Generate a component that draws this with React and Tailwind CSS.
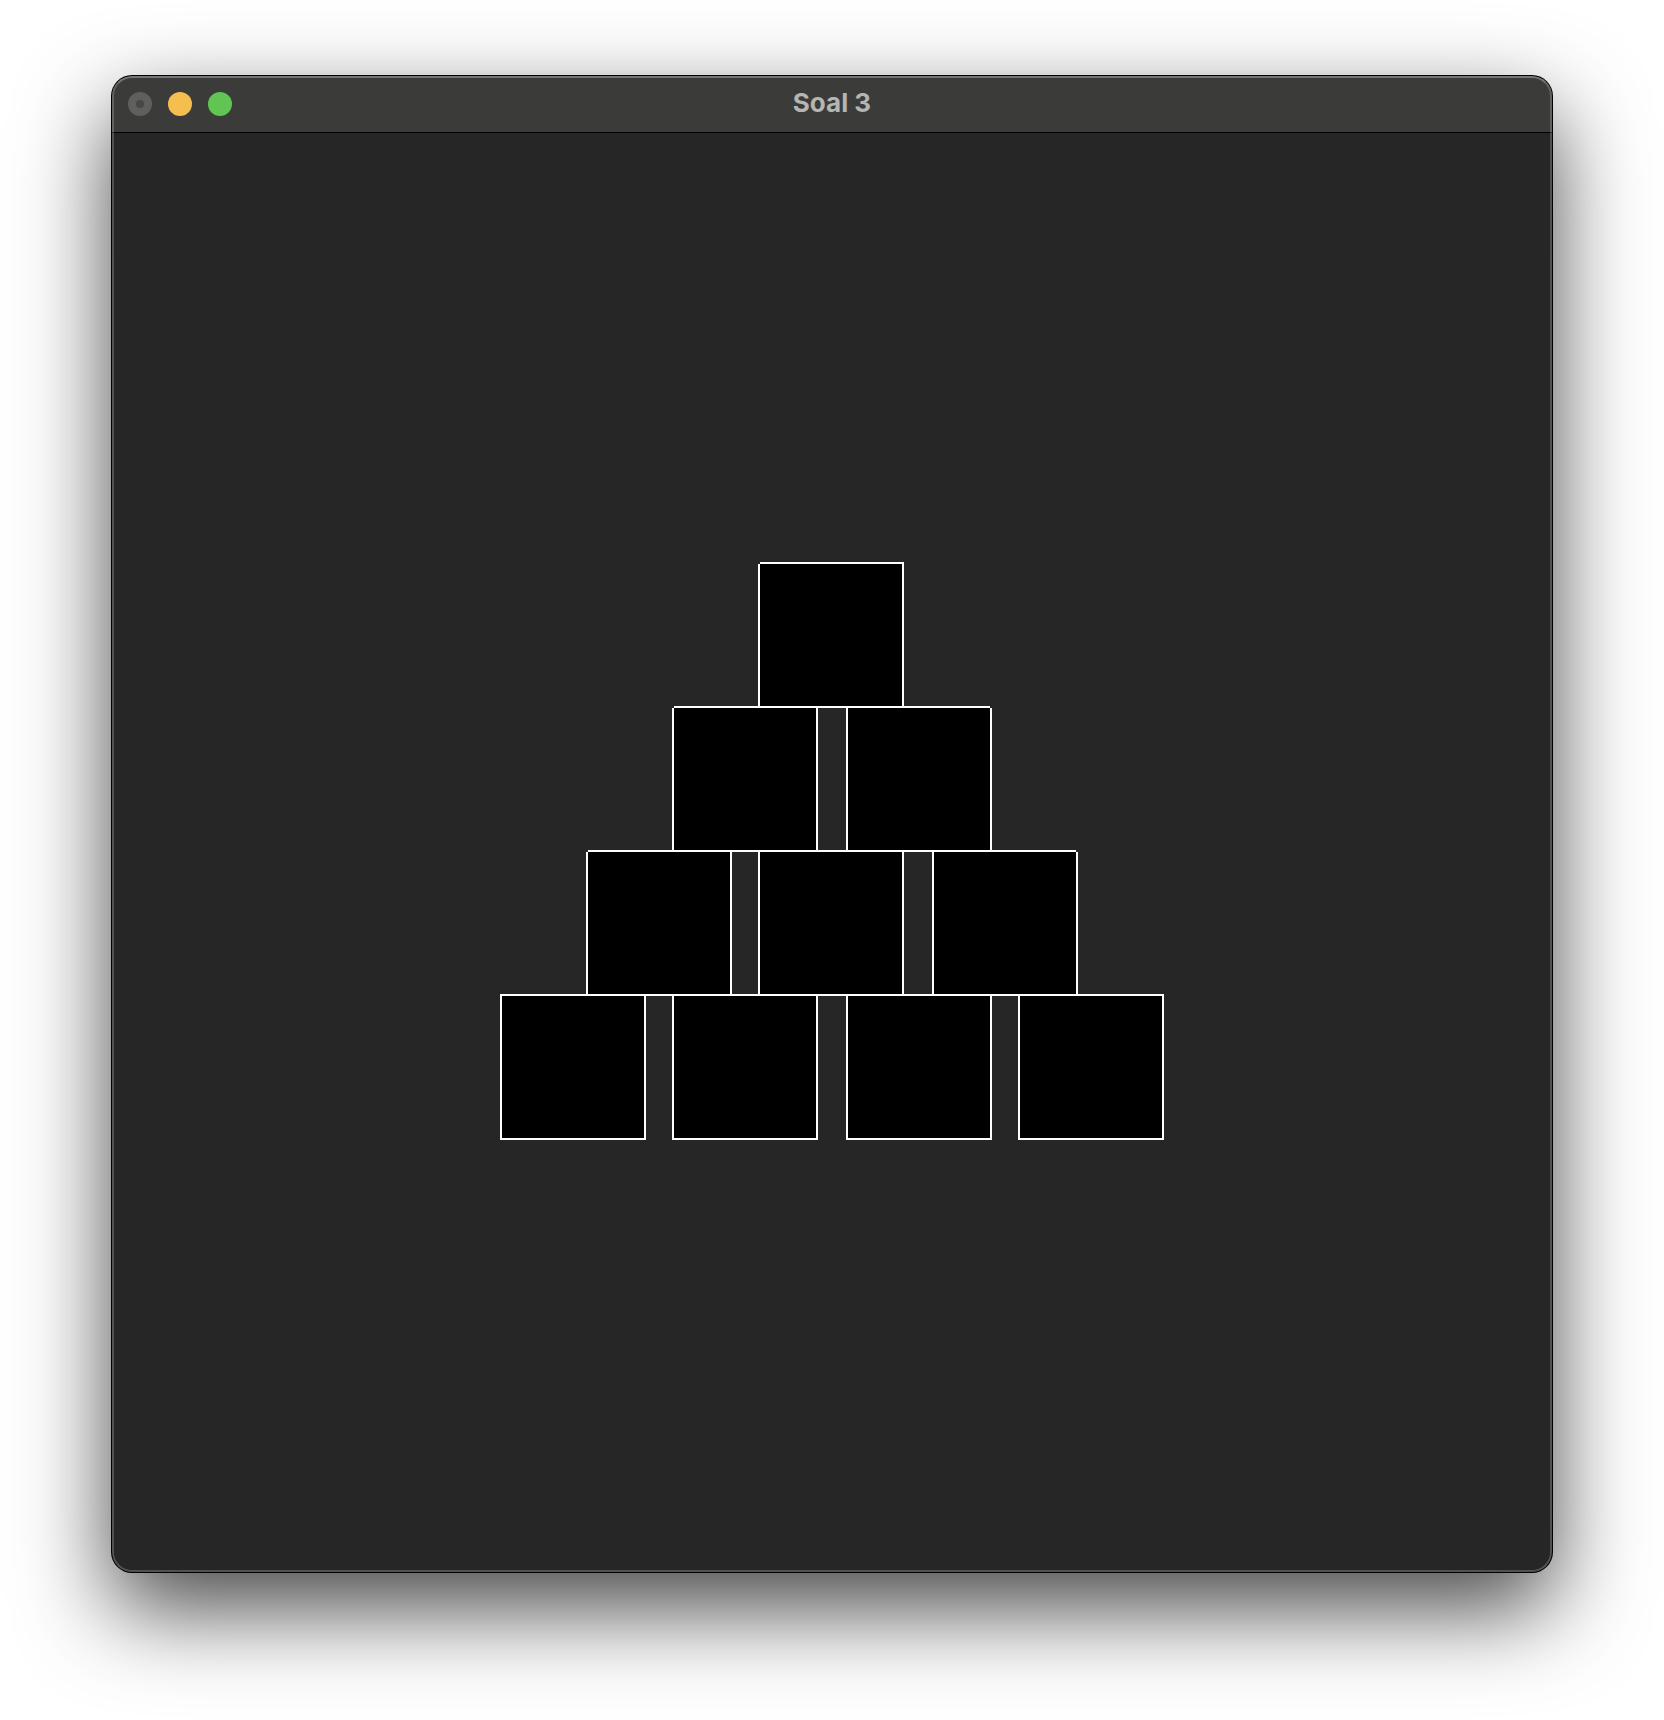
const block = "size-[146px] shrink-0 border-2 border-white bg-black";
const notchLeft = "absolute -top-0.5 -left-0.5 size-0.5 bg-[#262626]";
const notchRight = "absolute -top-0.5 -right-0.5 size-0.5 bg-[#262626]";

function Block({ left, right }) {
  return (
    <div className={`relative ${block}`}>
      {left && <span className={notchLeft} />}
      {right && <span className={notchRight} />}
    </div>
  );
}

function TitleBar() {
  return (
    <header className="box-content grid h-14 grid-cols-[1fr_auto_1fr] items-center border-b border-black bg-[#3b3b39] px-4">
      <div className="flex gap-4">
        <button
          aria-label="Close"
          className="flex size-6 items-center justify-center rounded-full bg-[#5f5f5d]"
        >
          <span className="size-2 rounded-full bg-[#484846]" />
        </button>
        <button aria-label="Minimize" className="size-6 rounded-full bg-[#f5bf4f]" />
        <button aria-label="Zoom" className="size-6 rounded-full bg-[#61c554]" />
      </div>
      <h1 className="pb-0.5 text-[26px] leading-8 font-bold text-[#b5b5b4]">Soal 3</h1>
    </header>
  );
}

export default function App() {
  return (
    <div className="bg-white px-28 pt-19 pb-37 font-[Inter,sans-serif]">
      <main className="relative overflow-hidden rounded-[20px] bg-[#262626] shadow-[0_0_0_1px_#000,0_36px_92px_rgba(0,0,0,0.73)]">
        <TitleBar />
        <section className="flex flex-col items-center pt-[429px] pb-[432px]">
          <div className="flex pr-0.5">
            <Block left />
          </div>
          <div className="-mt-0.5 flex gap-7">
            <Block left />
            <Block right />
          </div>
          <div className="-mt-0.5 flex">
            <Block left />
            <div className="ml-[26px] flex gap-7">
              <Block />
              <Block right />
            </div>
          </div>
          <div className="-mt-0.5 flex gap-7">
            <div className="flex gap-[26px]">
              <Block />
              <Block />
            </div>
            <div className="flex gap-[26px]">
              <Block />
              <Block />
            </div>
          </div>
        </section>
        <div className="pointer-events-none absolute inset-0 rounded-[20px] border-2 border-white/20 border-t-white/30" />
      </main>
    </div>
  );
}
